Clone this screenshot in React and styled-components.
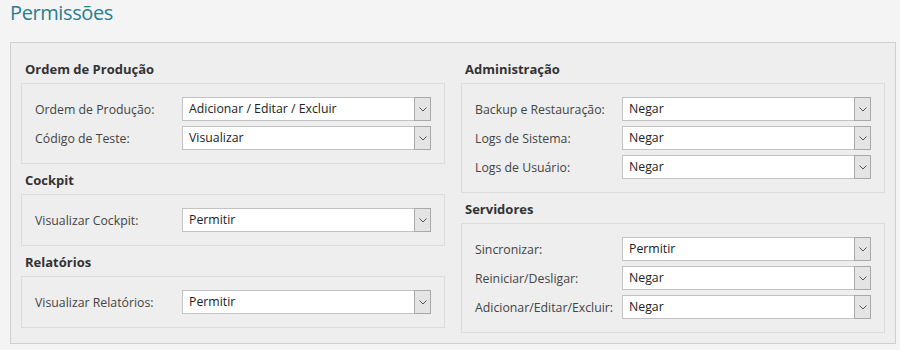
import styled, { createGlobalStyle } from "styled-components";

const GlobalStyle = createGlobalStyle`
	body {
		margin: 0;
		background: #f4f4f4;
		font-family: "Open Sans", "Noto Sans", sans-serif;
		font-size: 12.3px;
		color: #333;
	}
`;

const Page = styled.div`
	padding: 0 4px 0 10px;
`;

const Title = styled.h1`
	margin: 0;
	height: 42px;
	padding-top: 0;
	box-sizing: border-box;
	font-size: 20px;
	font-weight: normal;
	letter-spacing: -0.4px;
	color: #2a7d90;
	line-height: 26px;
`;

const Panel = styled.div`
	background: #eeeeee;
	border: 1px solid #cfcfcf;
	padding: 10px;
	display: grid;
	grid-template-columns: 1fr 1fr;
	gap: 16px;
	align-items: start;
`;

const Column = styled.div`
	display: flex;
	flex-direction: column;
`;

const GroupTitle = styled.div`
	font-weight: bold;
	font-size: 13px;
	line-height: 16px;
	padding: 8px 0 6px 4px;
	color: #333;
`;

const GroupBox = styled.div`
	border: 1px solid #dcdcdc;
	padding: 13px;
	display: flex;
	flex-direction: column;
	gap: 5px;
`;

const Row = styled.div`
	display: grid;
	grid-template-columns: 147px 1fr;
	align-items: center;
	height: 24px;
`;

const Label = styled.span`
	color: #444;
	white-space: nowrap;
`;

const Select = styled.div`
	display: flex;
	height: 24px;
	box-sizing: border-box;
	border: 1px solid #c3c3c3;
	background: #fff;
`;

const Value = styled.span`
	flex: 1;
	padding-left: 6px;
	line-height: 22px;
	color: #222;
`;

const Arrow = styled.span`
	width: 17px;
	margin: -1px -1px -1px 0;
	box-sizing: border-box;
	border: 1px solid #a9a9a9;
	background: #e4e4e4;
	display: flex;
	align-items: center;
	justify-content: center;
`;

const groups = {
	left: [
		{
			title: "Ordem de Produção",
			rows: [
				["Ordem de Produção:", "Adicionar / Editar / Excluir"],
				["Código de Teste:", "Visualizar"],
			],
		},
		{ title: "Cockpit", rows: [["Visualizar Cockpit:", "Permitir"]] },
		{ title: "Relatórios", rows: [["Visualizar Relatórios:", "Permitir"]] },
	],
	right: [
		{
			title: "Administração",
			rows: [
				["Backup e Restauração:", "Negar"],
				["Logs de Sistema:", "Negar"],
				["Logs de Usuário:", "Negar"],
			],
		},
		{
			title: "Servidores",
			rows: [
				["Sincronizar:", "Permitir"],
				["Reiniciar/Desligar:", "Negar"],
				["Adicionar/Editar/Excluir:", "Negar"],
			],
		},
	],
};

function Dropdown({ value }) {
	return (
		<Select>
			<Value>{value}</Value>
			<Arrow>
				<svg width="8" height="5" viewBox="0 0 8 5">
					<path d="M0.5 0.5 L4 4 L7.5 0.5" fill="none" stroke="#555" strokeWidth="1" />
				</svg>
			</Arrow>
		</Select>
	);
}

function Group({ title, rows }) {
	return (
		<>
			<GroupTitle>{title}</GroupTitle>
			<GroupBox>
				{rows.map(([label, value]) => (
					<Row key={label}>
						<Label>{label}</Label>
						<Dropdown value={value} />
					</Row>
				))}
			</GroupBox>
		</>
	);
}

export default function App() {
	return (
		<Page>
			<GlobalStyle />
			<Title>Permissões</Title>
			<Panel>
				<Column>
					{groups.left.map((g) => (
						<Group key={g.title} {...g} />
					))}
				</Column>
				<Column>
					{groups.right.map((g) => (
						<Group key={g.title} {...g} />
					))}
				</Column>
			</Panel>
		</Page>
	);
}
